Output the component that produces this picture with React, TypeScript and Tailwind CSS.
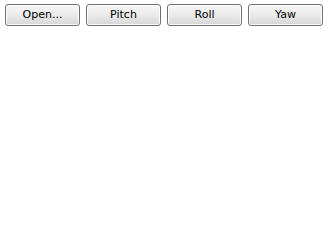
import React from 'react';

const labels = ['Open...', 'Pitch', 'Roll', 'Yaw'];

const App: React.FC = () => {
  return (
    <div className="w-[328px] h-[241px] bg-white" style={{ fontFamily: '"DejaVu Sans", Verdana, sans-serif' }}>
      <div className="flex gap-[6px] pl-[5px] pt-[4px]">
        {labels.map((label) => (
          <button
            key={label}
            className="w-[75px] h-[22px] rounded-[3px] border border-[#707070] bg-gradient-to-b from-[#f6f6f6] via-[#ebebeb] to-[#d6d6d6] text-[11px] text-black flex items-center justify-center shadow-[inset_0_0_0_1px_#fcfcfc]"
          >
            {label}
          </button>
        ))}
      </div>
    </div>
  );
};

export default App;
